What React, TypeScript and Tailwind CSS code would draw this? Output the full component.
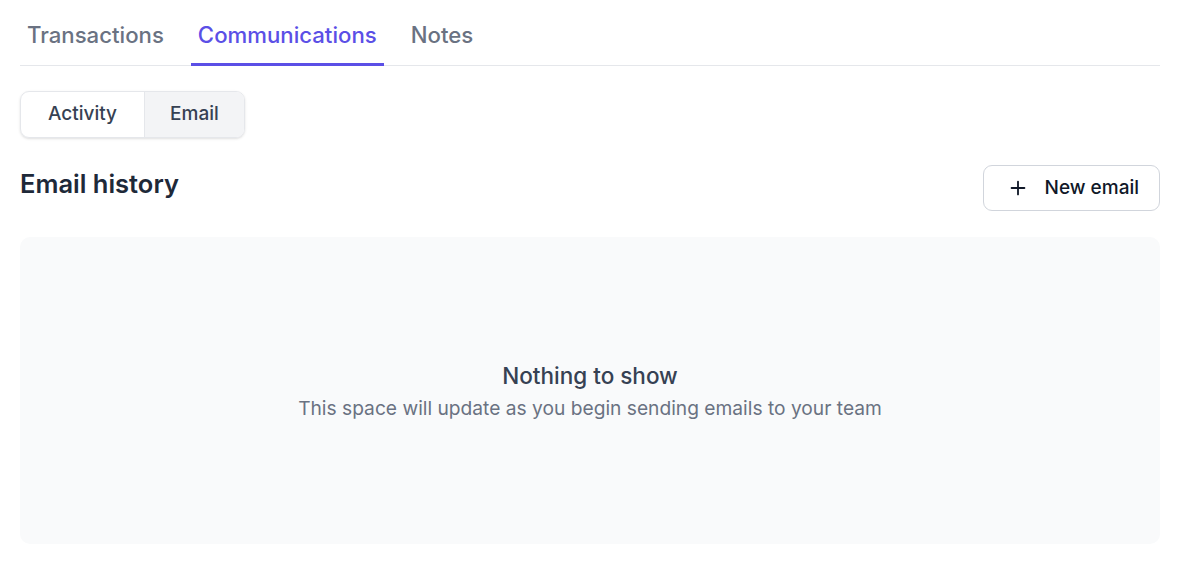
import { Plus } from "lucide-react";

const TABS = ["Transactions", "Communications", "Notes"];

export default function App() {
  const active = "Communications";

  return (
    <div className="min-h-screen bg-white pr-[18px] pl-5 font-['Inter',sans-serif]">
      {/* ── Top tabs ── */}
      <div className="flex gap-5 border-b border-gray-200">
        {TABS.map((t) => (
          <button
            key={t}
            className={
              t === active
                ? "-mb-px border-b-[3px] border-[#5b4fe6] px-[7px] pt-[21px] pb-[14px] text-[22.2px] leading-[28px] font-medium text-[#5b4fe6]"
                : "-mb-px border-b-[3px] border-transparent px-[7px] pt-[21px] pb-[14px] text-[22.2px] leading-[28px] font-medium text-gray-500"
            }
          >
            {t}
          </button>
        ))}
      </div>

      {/* ── Segmented control ── */}
      <div className="mt-[25px] inline-flex h-[47px] overflow-hidden rounded-[9px] border border-gray-200 shadow-sm">
        <button className="px-[27px] text-[19px] font-medium text-gray-700">Activity</button>
        <button className="border-l border-gray-200 bg-gray-100 px-[25px] text-[19px] font-medium text-gray-700">
          Email
        </button>
      </div>

      {/* ── Header ── */}
      <div className="mt-[27px] flex items-start justify-between">
        <h2 className="mt-[3px] text-[25.5px] leading-[32px] font-semibold text-gray-800">Email history</h2>
        <button className="flex h-[46px] items-center gap-4 rounded-[9px] border border-gray-300 pr-[20px] pl-[23px] text-[19px] font-medium text-gray-900">
          <Plus size={22} strokeWidth={2} />
          New email
        </button>
      </div>

      {/* ── Empty state ── */}
      <div className="mt-[26px] flex h-[307px] flex-col items-center justify-center rounded-[10px] bg-gray-50">
        <p className="text-[22.5px] leading-[28px] font-medium text-gray-700">Nothing to show</p>
        <p className="mt-[6px] text-[19.2px] leading-[24px] text-gray-500">
          This space will update as you begin sending emails to your team
        </p>
      </div>
    </div>
  );
}
